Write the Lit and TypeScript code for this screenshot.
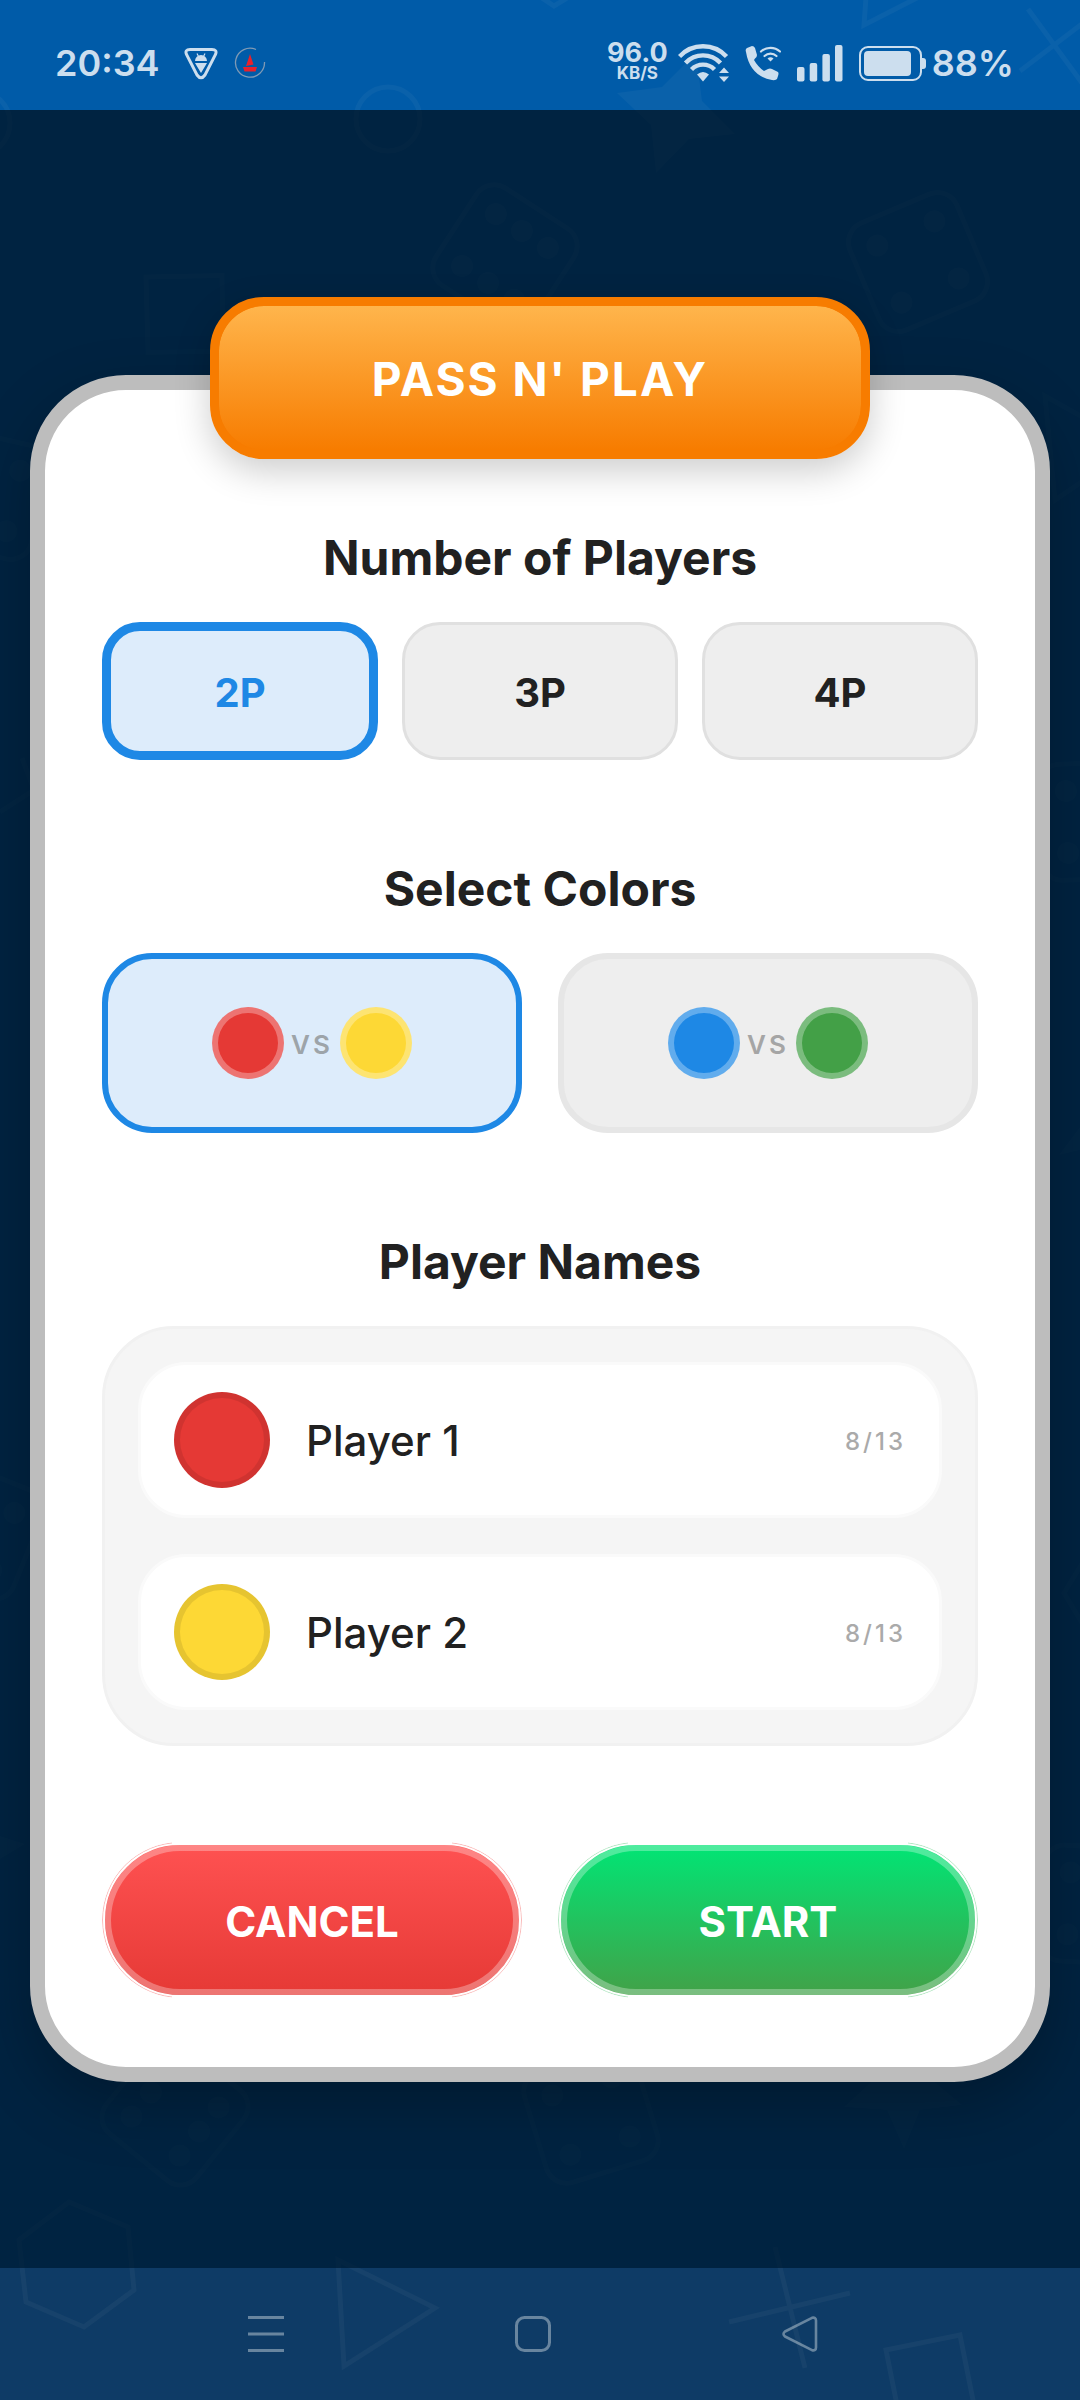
import { LitElement, html, css, svg } from "lit";
import { customElement, state } from "lit/decorators.js";
import { classMap } from "lit/directives/class-map.js";

type Token = "red" | "yellow" | "blue" | "green";

const PAIRS: Token[][] = [
  ["red", "yellow"],
  ["blue", "green"],
];
const MAX_NAME = 13;

/** Pips sit on a 62px square; a six adds the middle of each row. */
const die = (x: number, y: number, angle: number, six = false) => svg`
  <g transform="translate(${x} ${y}) rotate(${angle})">
    <rect x="-58" y="-58" width="116" height="116" rx="21" class="line"/>
    ${[-31, 31].map((cy) =>
      (six ? [-31, 0, 31] : [-31, 31]).map(
        (cx) => svg`<circle cx=${cx} cy=${cy} r="11" class="solid"/>`
      )
    )}
  </g>`;

@customElement("game-backdrop")
export class GameBackdrop extends LitElement {
  static styles = css`
    :host {
      display: block;
    }
    .art {
      display: block;
      width: 100%;
      height: 100%;
    }
    .line {
      fill: none;
      stroke: rgba(255, 255, 235, 0.04);
      stroke-width: 5;
    }
    .solid {
      fill: rgba(255, 255, 235, 0.04);
    }
  `;

  render() {
    return html`<svg class="art" viewBox="0 0 1080 2400" preserveAspectRatio="xMidYMid slice" aria-hidden="true">
      <circle cx="388" cy="119" r="32" class="line"/>
      <circle cx="-22" cy="123" r="32" class="line"/>
      <path d="M524 -14L554 6L590 -16" class="line"/>
      <path d="M864 25L868 -30L960 -24Z" class="line"/>
      <path d="M1028 9L1098 105M1020 71L1104 7" class="line"/>
      <path d="M617 93L651 125L656 173L689 139L735 134L702 101L696 53L662 87Z" class="solid"/>
      ${die(505, 257, 33, true)}
      ${die(918, 262, -23)}
      <path d="M146 277L222 275.500L223 351L148 352.500Z" class="line"/>
      ${die(-17, 494, 13)}
      <path d="M1045 396L1055 500L1134 446Z" class="line"/>
      <path d="M22 758L34 790L0 812" class="line"/>
      ${die(1098, 821, -2)}
      <path d="M1059 1155L1080 1127L1080 1150Z" class="solid"/>
      <path d="M1064 1593L1096 1541L1140 1593L1096 1646Z" class="line"/>
      ${die(-26, 1530, 22)}
      <path d="M25 1844L0 1836V1859Z" class="solid"/>
      ${die(1100, 1905, 3)}
      ${die(175, 2112, -51, true)}
      <path d="M69 2202L128 2227L134 2290L84 2327L26 2302L19 2240Z" class="line"/>
      <path d="M338 2260L435 2308L344 2366Z" class="line"/>
      ${die(591, 2116, -17)}
      <path d="M844 2107L887 2110L904 2149L920 2110L962 2105L925 2074L880 2074Z" class="solid"/>
      <path d="M775 2247L805 2368M729 2322L850 2293" class="line"/>
      <path d="M886 2350L960 2335L975 2410L901 2425Z" class="line"/>
    </svg>`;
  }
}

@customElement("status-bar")
export class StatusBar extends LitElement {
  static styles = css`
    :host {
      display: flex;
      align-items: center;
      justify-content: space-between;
      box-sizing: border-box;
      height: 110px;
      padding: 15px 66px 0 55px;
      color: #ccdeee;
      font: 600 36px/44px Inter, "Liberation Sans", sans-serif;
    }
    .side {
      display: flex;
      align-items: center;
    }
    .icon {
      display: block;
      flex: none;
    }
    .app {
      margin-left: 24px;
    }
    .app + .app {
      margin-left: 16px;
    }
    .speed {
      display: grid;
      justify-items: center;
      margin-right: 10px;
      font-size: 27px;
      font-weight: 700;
      line-height: 20px;
    }
    .unit {
      font-size: 17px;
      line-height: 20px;
    }
    .system {
      margin-right: 16px;
    }
    .battery {
      margin-right: 5px;
    }
  `;

  render() {
    return html`
      <div class="side">
        <span>20:34</span>
        <svg class="icon app" width="34" height="34" viewBox="0 0 34 34" fill="none" aria-hidden="true">
          <path d="M6 3.500H28Q33.500 3.500 31.500 8.500L21 29Q17 34.500 13 29L2.500 8.500Q0.500 3.500 6 3.500Z" stroke="currentColor" stroke-width="3"/>
          <path d="M11 15A6 6 0 0 1 23 15ZM11 17H23L17 27Z" fill="currentColor"/>
          <path d="M13 7.500L14.500 10.500M21 7.500L19.500 10.500" stroke="currentColor" stroke-width="1.200"/>
        </svg>
        <svg class="icon app" width="32" height="32" viewBox="0 0 32 32" fill="none" aria-hidden="true">
          <path d="M22 2.500A14.500 14.500 0 1 0 30.500 15" stroke="#7f9ab5" stroke-width="1.300"/>
          <path d="M16 7L19.500 17.500L12 19ZM9 20H23L21.500 24.500H10.500Z" fill="#e8212b"/>
        </svg>
      </div>
      <div class="side">
        <span class="speed"><span>96.0</span><span class="unit">KB/S</span></span>
        <svg class="icon system" width="51" height="38" viewBox="0 0 51 38" fill="none" aria-hidden="true">
          <g stroke="currentColor" stroke-width="4.400">
            <path d="M1.500 12.500A32 32 0 0 1 48.500 12.500"/>
            <path d="M7.500 19A24 24 0 0 1 42.500 19"/>
            <path d="M13.500 25.500A16 16 0 0 1 36.500 25.500"/>
          </g>
          <path d="M19 30.500Q25 25.500 31 30.500L25 37.500Z" fill="currentColor"/>
          <path d="M41 29L46 23.500L51 29ZM41 32.500L46 38L51 32.500Z" fill="currentColor"/>
        </svg>
        <svg class="icon system" width="36" height="36" viewBox="0 0 36 36" fill="none" aria-hidden="true">
          <path d="M2 3L7 1Q9 1 10 3L12 10Q12 12 10 13.500L9 15Q13 22 19 26L23 24Q25 23 27 24L33 27Q34 28 33 31L32 34Q31 35.500 27 35Q5 31 1 7Q0 4 2 3Z" fill="currentColor"/>
          <path d="M16 6.500A14 14 0 0 1 35 6.500M19.500 11A9 9 0 0 1 31.500 11" stroke="currentColor" stroke-width="2.200" stroke-linecap="round"/>
          <path d="M22.500 13.500Q25.500 11 28.500 13.500L25.500 16.500Z" fill="currentColor"/>
        </svg>
        <svg class="icon system" width="46" height="38" viewBox="0 0 46 38" fill="currentColor" aria-hidden="true">
          <rect y="23" width="7.500" height="14.500" rx="2"/>
          <rect x="12.700" y="19" width="7.500" height="18.500" rx="2"/>
          <rect x="25.400" y="10" width="7.500" height="27.500" rx="2"/>
          <rect x="38" y="1" width="7.500" height="36.500" rx="2"/>
        </svg>
        <svg class="icon battery" width="68" height="36" viewBox="0 0 68 36" fill="none" aria-hidden="true">
          <rect x="1" y="2" width="61" height="33" rx="8" stroke="currentColor" stroke-width="2"/>
          <rect x="5" y="6" width="47" height="25" rx="4" fill="currentColor"/>
          <path d="M62 13H64Q67 13 67 16V21Q67 24 64 24H62Z" fill="currentColor"/>
        </svg>
        <span>88%</span>
      </div>
    `;
  }
}

@customElement("system-nav")
export class SystemNav extends LitElement {
  static styles = css`
    :host {
      display: grid;
      grid-template-columns: repeat(3, 1fr);
      box-sizing: border-box;
      height: 132px;
      padding: 0 146px 0 132px;
      background: #0e3b66;
    }
    .key {
      display: grid;
      place-items: center;
      padding: 0;
      border: 0;
      background: none;
      color: #68859f;
    }
  `;

  render() {
    const icon = (shape: unknown) => html`<svg width="38" height="38" viewBox="0 0 38 38" fill="none"
      stroke="currentColor" stroke-width="3" stroke-linejoin="round" aria-hidden="true">${shape}</svg>`;
    return html`
      <button class="key" type="button" aria-label="Recent apps">
        ${icon(svg`<path d="M1 2.500H37M1 19H37M1 35.500H37"/>`)}
      </button>
      <button class="key" type="button" aria-label="Home">
        ${icon(svg`<rect x="2.500" y="2.500" width="33" height="33" rx="8"/>`)}
      </button>
      <button class="key" type="button" aria-label="Back">
        ${icon(svg`<path d="M31 2.800L4 16.500Q1 19 4 21.500L31 35.200Q35 36 35 32.500V5.500Q35 2 31 2.800Z" stroke-width="2.600"/>`)}
      </button>
    `;
  }
}

@customElement("app-root")
export class AppRoot extends LitElement {
  @state() private count = 2;
  @state() private pair = 0;
  @state() private names = ["Player 1", "Player 2", "Player 3", "Player 4"];

  static styles = css`
    :host {
      position: relative;
      display: flex;
      flex-direction: column;
      min-height: 100vh;
      overflow: hidden;
      background: #005ba8;
      color: #212121;
      font-family: Inter, "Liberation Sans", sans-serif;
    }
    .backdrop {
      position: absolute;
      inset: 0;
      pointer-events: none;
    }
    .status,
    .stage {
      position: relative;
    }
    .stage {
      display: flex;
      flex: 1;
      flex-direction: column;
      align-items: center;
      justify-content: center;
      padding: 0 30px;
      background: rgba(0, 0, 0, 0.61);
    }
    .title {
      position: relative;
      z-index: 1;
      box-sizing: border-box;
      width: 660px;
      max-width: 90%;
      height: 162px;
      margin: 0 0 -84px;
      border: 9px solid #f77c00;
      border-radius: 54px;
      background:
        linear-gradient(#ffb54c, #f77c00) padding-box,
        linear-gradient(#f77c00, #f77c00) border-box;
      box-shadow: 0 12px 36px rgba(0, 0, 0, 0.2);
      color: #fff;
      font-size: 46px;
      font-weight: 700;
      letter-spacing: 2px;
      line-height: 147px;
      text-align: center;
    }
    .card {
      box-sizing: border-box;
      width: 100%;
      padding: 138px 57px 69px;
      border: 15px solid #bdbdbd;
      border-radius: 96px;
      background: #fff;
      box-shadow: 0 24px 60px rgba(0, 0, 0, 0.25);
    }
    .heading {
      margin: 0 0 34px;
      font-size: 48px;
      font-weight: 700;
      line-height: 60px;
      text-align: center;
    }
    .group {
      margin-bottom: 99px;
    }
    .counts {
      display: grid;
      grid-template-columns: repeat(3, 1fr);
      gap: 24px;
    }
    .pairs,
    .actions {
      display: grid;
      grid-template-columns: repeat(2, 1fr);
      gap: 36px;
    }
    button {
      font-family: inherit;
      cursor: pointer;
    }
    .count {
      height: 138px;
      padding: 3px 0 0;
      border: 3px solid #e0e0e0;
      border-radius: 38px;
      background: #eee;
      color: #212121;
      font-size: 40px;
      font-weight: 700;
    }
    .pair {
      display: flex;
      align-items: center;
      justify-content: center;
      gap: 7px;
      height: 180px;
      border: 6px solid #e6e6e6;
      border-radius: 50px;
      background: #eee;
      color: #a5a5a5;
      font-size: 26px;
      font-weight: 600;
      letter-spacing: 3px;
    }
    .versus {
      padding-top: 3px;
    }
    .count.on {
      border: 9px solid #1e88e5;
      background: #ddecfb;
      color: #1e88e5;
    }
    .pair.on {
      border-color: #1e88e5;
      background: #ddecfb;
      color: #9da4a9;
    }
    .token {
      box-sizing: border-box;
      width: 72px;
      height: 72px;
      border: 6px solid rgba(255, 255, 255, 0.3);
      border-radius: 50%;
    }
    .token.large {
      width: 96px;
      height: 96px;
      border-color: rgba(0, 0, 0, 0.09);
    }
    .red {
      background-color: #e53935;
    }
    .yellow {
      background-color: #fdd835;
    }
    .blue {
      background-color: #1e88e5;
    }
    .green {
      background-color: #43a047;
    }
    .names {
      display: grid;
      gap: 36px;
      padding: 33px;
      border: 3px solid #f1f1f1;
      border-radius: 72px;
      background: #f5f5f5;
    }
    .row {
      display: flex;
      align-items: center;
      gap: 36px;
      box-sizing: border-box;
      height: 156px;
      padding: 0 33px;
      border: 3px solid #fafafa;
      border-radius: 48px;
      background: #fff;
    }
    .name {
      flex: 1;
      min-width: 0;
      padding: 3px 0 0;
      border: 0;
      outline: 0;
      background: none;
      color: #212121;
      font: 500 42px/60px Inter, "Liberation Sans", sans-serif;
    }
    .length {
      padding-top: 3px;
      color: #aaa;
      font-size: 24px;
      font-weight: 500;
      letter-spacing: 3px;
    }
    .actions {
      margin-top: 96px;
    }
    .action {
      position: relative;
      height: 156px;
      padding: 3px 0 0;
      border: 3px solid #fff;
      border-radius: 78px;
      box-shadow: inset 0 0 0 6px rgba(255, 255, 255, 0.3);
      color: #fff;
      font-size: 42px;
      font-weight: 700;
    }
    /* Hairline that follows the rounded ends only. */
    .action::after {
      content: "";
      position: absolute;
      inset: -3px;
      border: 1px solid #fab9b8;
      border-radius: 78px;
      mask: linear-gradient(90deg, #000 70px, transparent 70px calc(100% - 70px), #000 0);
    }
    .cancel {
      background: linear-gradient(#ff5252, #e53935) border-box;
    }
    .start {
      background: linear-gradient(#00e676, #43a047) border-box;
    }
    .start::after {
      border-color: #b2e6c2;
    }
    .last {
      margin-bottom: 0;
    }
  `;

  private rename(index: number, event: Event) {
    const value = (event.target as HTMLInputElement).value;
    this.names = this.names.map((name, i) => (i === index ? value : name));
  }

  render() {
    const order = [...PAIRS[this.pair], ...PAIRS[1 - this.pair]];
    return html`
      <game-backdrop class="backdrop"></game-backdrop>
      <status-bar class="status"></status-bar>
      <main class="stage">
        <h1 class="title">PASS N' PLAY</h1>
        <div class="card">
          <section class="group">
            <h2 class="heading">Number of Players</h2>
            <div class="counts">
              ${[2, 3, 4].map(
                (n) => html`<button
                  type="button"
                  class=${classMap({ count: true, on: n === this.count })}
                  aria-pressed=${n === this.count}
                  @click=${() => (this.count = n)}
                >${n}P</button>`
              )}
            </div>
          </section>
          <section class="group">
            <h2 class="heading">Select Colors</h2>
            <div class="pairs">
              ${PAIRS.map(
                ([a, b], i) => html`<button
                  type="button"
                  class=${classMap({ pair: true, on: i === this.pair })}
                  aria-pressed=${i === this.pair}
                  aria-label="${a} versus ${b}"
                  @click=${() => (this.pair = i)}
                ><span class="token ${a}"></span><span class="versus">VS</span><span class="token ${b}"></span></button>`
              )}
            </div>
          </section>
          <section class="group last">
            <h2 class="heading">Player Names</h2>
            <div class="names">
              ${this.names.slice(0, this.count).map(
                (name, i) => html`<label class="row">
                  <span class="token large ${order[i]}"></span>
                  <input
                    class="name"
                    type="text"
                    size="1"
                    maxlength=${MAX_NAME}
                    aria-label="Name of player ${i + 1}"
                    .value=${name}
                    @input=${(e: Event) => this.rename(i, e)}
                  />
                  <span class="length">${name.length}/${MAX_NAME}</span>
                </label>`
              )}
            </div>
          </section>
          <div class="actions">
            <button type="button" class="action cancel">CANCEL</button>
            <button type="button" class="action start">START</button>
          </div>
        </div>
      </main>
      <system-nav></system-nav>
    `;
  }
}
